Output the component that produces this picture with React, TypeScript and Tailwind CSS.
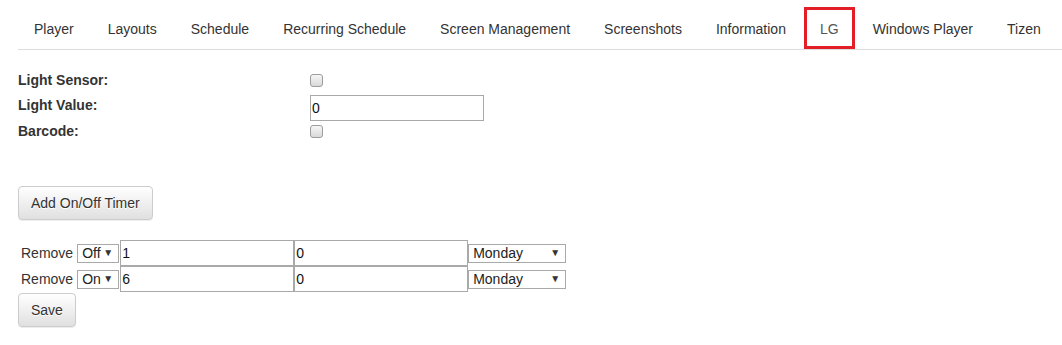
const tabs = [
  'Player',
  'Layouts',
  'Schedule',
  'Recurring Schedule',
  'Screen Management',
  'Screenshots',
  'Information',
  'LG',
  'Windows Player',
  'Tizen',
]

function Checkbox() {
  return (
    <span className="mt-[5px] block h-[13px] w-[13px] rounded-[3px] border border-[#9c9c9c] bg-gradient-to-b from-[#f6f6f6] to-[#d9d9d9]" />
  )
}

function FakeSelect({ value, width }: { value: string; width: string }) {
  return (
    <div
      className={`flex h-[19px] items-center justify-between border border-[#a9a9a9] bg-white pl-[4px] pr-[5px] text-[14px] leading-none text-[#222] ${width}`}
    >
      <span>{value}</span>
      <span className="text-[10px] text-[#333]">▼</span>
    </div>
  )
}

function Button({ children }: { children: React.ReactNode }) {
  return (
    <button className="h-[34px] rounded-[4px] border border-[#ccc] bg-gradient-to-b from-white to-[#e0e0e0] px-[12px] text-[14px] text-[#333] shadow-[0_1px_1px_rgba(0,0,0,0.075)] [text-shadow:0_1px_0_#fff]">
      {children}
    </button>
  )
}

function TimerRow({ mode, start, end }: { mode: string; start: string; end: string }) {
  return (
    <div className="flex h-[26px] items-center">
      <span className="ml-[3px] text-[14px] text-[#333]">Remove</span>
      <div className="ml-[4px]">
        <FakeSelect value={mode} width="w-[42px]" />
      </div>
      <input
        defaultValue={start}
        className="ml-[1px] h-[26px] w-[174px] border border-[#a9a9a9] px-[1px] text-[14px] text-[#111] outline-none"
      />
      <input
        defaultValue={end}
        className="h-[26px] w-[174px] border border-[#a9a9a9] px-[1px] text-[14px] text-[#111] outline-none"
      />
      <FakeSelect value="Monday" width="w-[98px]" />
    </div>
  )
}

export default function App() {
  return (
    <div className="min-h-[345px] w-[1062px] bg-white font-['Liberation_Sans',Arial,sans-serif] text-[14px] text-[#333]">
      <div className="pl-[18px] pt-[7px]">
        <ul className="flex border-b border-[#ddd]">
          {tabs.map((t) =>
            t === 'LG' ? (
              <li
                key={t}
                className="mr-[2px] flex h-[42px] items-center border-[3px] border-[#e31e26] px-[13px] pt-[2px] text-[#555]"
              >
                {t}
              </li>
            ) : (
              <li key={t} className="mr-[2px] flex h-[42px] items-center px-4 pt-[2px] text-[#333]">
                {t}
              </li>
            )
          )}
        </ul>
      </div>

      <div className="pl-[18px] pt-[19px]">
        <div className="flex h-[25px]">
          <label className="w-[292px] pt-[1px] font-bold leading-[20px]">Light Sensor:</label>
          <Checkbox />
        </div>
        <div className="flex h-[26px]">
          <label className="w-[292px] pt-[1px] font-bold leading-[20px]">Light Value:</label>
          <input
            defaultValue="0"
            className="mt-[1px] h-[26px] w-[174px] border border-[#a9a9a9] px-[1px] text-[14px] text-[#111] outline-none"
          />
        </div>
        <div className="flex h-[25px]">
          <label className="w-[292px] pt-[1px] font-bold leading-[20px]">Barcode:</label>
          <Checkbox />
        </div>

        <div className="mt-[41px]">
          <Button>Add On/Off Timer</Button>
        </div>

        <div className="mt-[20px]">
          <TimerRow mode="Off" start="1" end="0" />
          <TimerRow mode="On" start="6" end="0" />
        </div>

        <div className="mt-[1px]">
          <Button>Save</Button>
        </div>
      </div>
    </div>
  )
}
